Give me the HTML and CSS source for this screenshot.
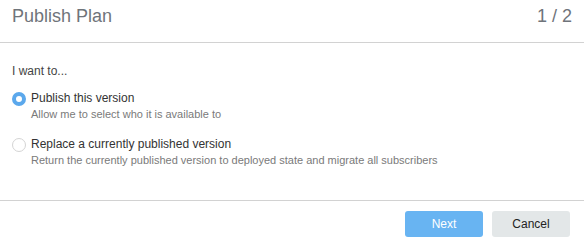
FILE: index.html
```html
<!DOCTYPE html>
<html>
<head>
<meta charset="utf-8">
<link rel="stylesheet" href="styles.css">
</head>
<body>
<div class="dialog">
  <header class="header">
    <div class="title">Publish Plan</div>
    <div class="step">1 / 2</div>
  </header>
  <main class="content">
    <div class="prompt">I want to...</div>
    <div class="options">
      <div class="option">
        <span class="radio checked"></span>
        <div class="option-text">
          <div class="option-title">Publish this version</div>
          <div class="option-desc">Allow me to select who it is available to</div>
        </div>
      </div>
      <div class="option">
        <span class="radio"></span>
        <div class="option-text">
          <div class="option-title">Replace a currently published version</div>
          <div class="option-desc">Return the currently published version to deployed state and migrate all subscribers</div>
        </div>
      </div>
    </div>
  </main>
  <footer class="footer">
    <button class="btn btn-primary">Next</button>
    <button class="btn btn-secondary">Cancel</button>
  </footer>
</div>
</body>
</html>
```
FILE: styles.css
```css
* { box-sizing: border-box; }
html, body { margin: 0; padding: 0; background: #fff; }
body { font-family: "Liberation Sans", Arial, sans-serif; }
.dialog {
  height: 243px;
  display: flex;
  flex-direction: column;
}
.header {
  display: flex;
  justify-content: space-between;
  align-items: flex-start;
  padding: 6px 12px 16px 12px;
  border-bottom: 1px solid #d2d2d2;
  height: 43px;
}
.title, .step {
  font-size: 18px;
  line-height: 20px;
  color: #6f747a;
}
.content {
  flex: 1;
  padding: 20px 12px 0 12px;
  border-bottom: 1px solid #d2d2d2;
}
.prompt {
  font-size: 12px;
  line-height: 16px;
  color: #444;
}
.options {
  display: flex;
  flex-direction: column;
  gap: 13px;
  margin-top: 11px;
}
.option {
  display: flex;
  align-items: flex-start;
  gap: 5px;
}
.radio {
  width: 14px;
  height: 14px;
  border-radius: 50%;
  border: 1px solid #d4d4d4;
  background: #fff;
  margin-top: 2px;
  flex: none;
}
.radio.checked {
  border: 4px solid #5ba8ec;
}
.option-title {
  font-size: 12px;
  line-height: 16px;
  color: #333;
}
.option-desc {
  font-size: 11px;
  line-height: 17px;
  color: #7a7a7a;
}
.footer {
  display: flex;
  justify-content: flex-end;
  gap: 9px;
  padding: 10px 14px 0 0;
  height: 42px;
}
.btn {
  width: 78px;
  height: 26px;
  border: none;
  border-radius: 3px;
  font-family: "Liberation Sans", Arial, sans-serif;
  font-size: 12px;
  padding: 0;
}
.btn-primary {
  background: #68b4f2;
  color: #fff;
}
.btn-secondary {
  background: #e3e7e8;
  color: #222;
}
```
